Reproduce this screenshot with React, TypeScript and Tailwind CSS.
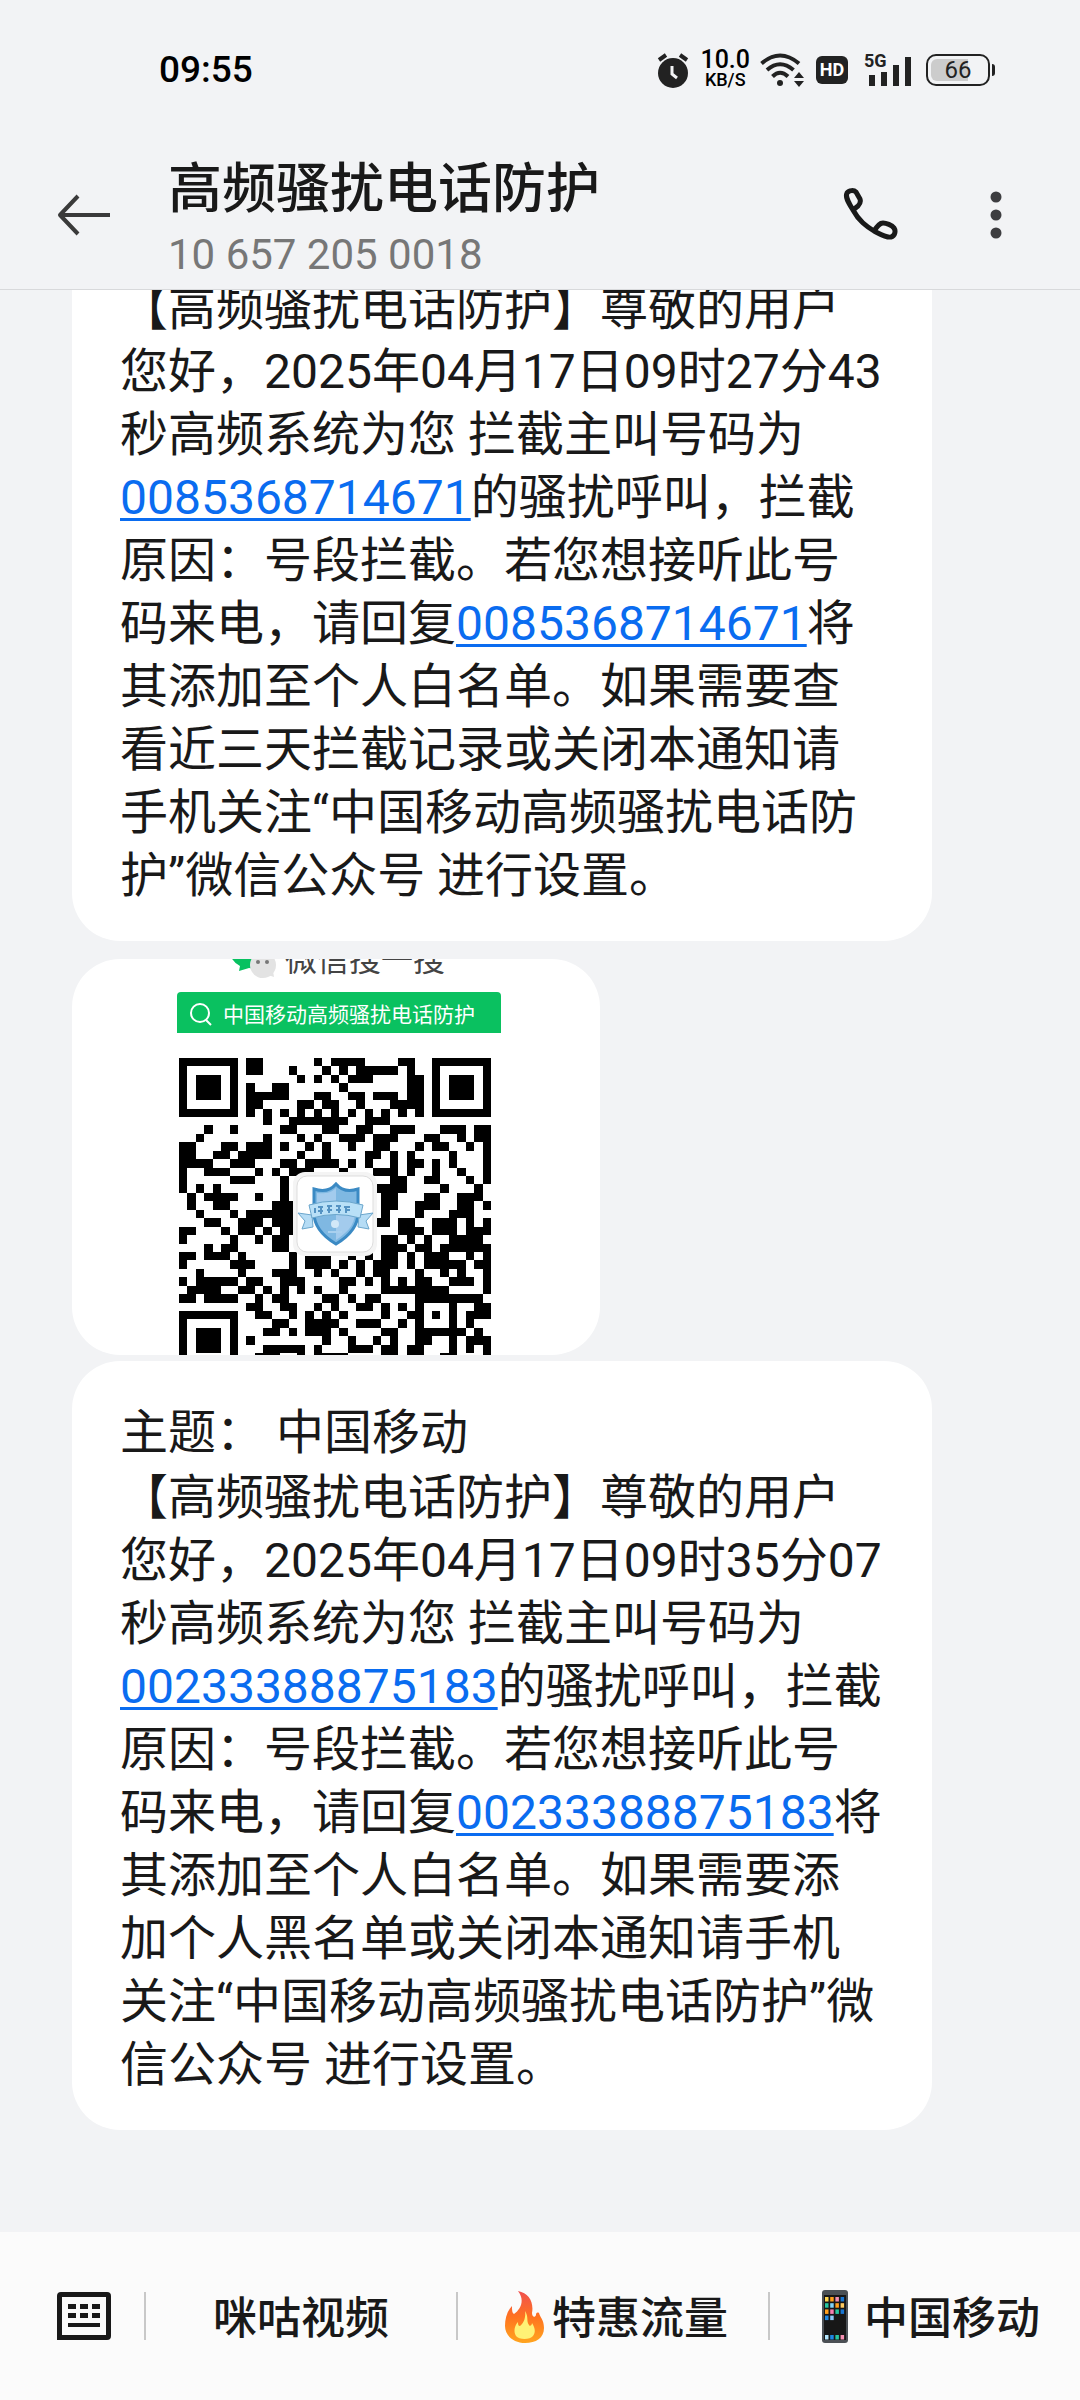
import React from 'react';

// black runs per row, [start, end)
const QR_ROWS: number[][][] = [
    [[0, 7], [8, 10], [16, 17], [18, 22], [26, 28], [30, 37]],
    [[0, 1], [6, 7], [8, 10], [13, 14], [17, 18], [19, 20], [21, 26], [27, 28], [30, 31], [36, 37]],
    [[0, 1], [2, 5], [6, 7], [14, 15], [16, 17], [18, 19], [20, 23], [27, 29], [30, 31], [32, 35], [36, 37]],
    [[0, 1], [2, 5], [6, 7], [8, 9], [11, 13], [19, 20], [27, 29], [30, 31], [32, 35], [36, 37]],
    [[0, 1], [2, 5], [6, 7], [8, 13], [16, 18], [20, 22], [23, 26], [27, 29], [30, 31], [32, 35], [36, 37]],
    [[0, 1], [6, 7], [8, 10], [14, 16], [17, 19], [21, 22], [25, 29], [30, 31], [36, 37]],
    [[0, 7], [8, 9], [10, 11], [12, 13], [14, 15], [16, 17], [18, 19], [20, 21], [22, 23], [24, 25], [26, 27], [28, 29], [30, 37]],
    [[10, 11], [13, 20], [22, 25]],
    [[3, 4], [6, 7], [12, 14], [17, 19], [21, 23], [25, 28], [31, 34], [35, 37]],
    [[2, 3], [10, 11], [14, 15], [16, 17], [19, 22], [23, 26], [29, 31], [33, 34], [35, 37]],
    [[0, 2], [5, 7], [8, 11], [12, 13], [15, 16], [17, 18], [20, 21], [23, 25], [28, 29], [30, 32], [34, 35], [36, 37]],
    [[0, 2], [4, 6], [7, 11], [14, 15], [17, 18], [22, 24], [25, 26], [27, 28], [32, 33], [36, 37]],
    [[0, 4], [6, 9], [12, 14], [15, 19], [20, 21], [22, 23], [25, 26], [27, 29], [30, 31], [32, 33], [36, 37]],
    [[0, 1], [3, 6], [9, 10], [11, 12], [13, 16], [19, 20], [23, 26], [27, 28], [30, 31], [33, 34], [36, 37]],
    [[0, 1], [6, 9], [12, 13], [25, 27], [29, 31], [34, 35], [36, 37]],
    [[0, 1], [2, 3], [4, 5], [12, 13], [23, 27], [31, 32], [35, 36]],
    [[1, 2], [3, 7], [9, 10], [12, 13], [24, 26], [29, 31], [33, 36]],
    [[1, 2], [4, 6], [11, 14], [24, 26], [28, 31], [33, 35], [36, 37]],
    [[2, 3], [6, 7], [8, 14], [24, 25], [28, 29], [32, 35]],
    [[3, 5], [7, 10], [11, 14], [23, 25], [26, 28], [30, 33], [34, 35], [36, 37]],
    [[0, 2], [5, 6], [7, 9], [10, 11], [12, 14], [26, 29], [30, 33], [34, 37]],
    [[0, 1], [6, 7], [9, 10], [11, 13], [24, 26], [27, 28], [29, 30], [32, 36]],
    [[3, 4], [5, 7], [11, 13], [24, 27], [28, 30], [31, 37]],
    [[0, 2], [3, 6], [7, 8], [13, 14], [15, 18], [20, 21], [22, 23], [24, 26], [27, 28], [29, 32], [34, 35], [36, 37]],
    [[0, 1], [6, 9], [13, 14], [15, 18], [19, 20], [21, 22], [23, 26], [27, 28], [29, 34], [35, 37]],
    [[2, 3], [7, 8], [11, 14], [16, 17], [18, 19], [21, 22], [23, 25], [28, 29], [31, 32], [33, 34], [36, 37]],
    [[0, 1], [2, 7], [8, 10], [12, 15], [19, 21], [22, 23], [24, 25], [26, 27], [28, 30], [32, 35], [36, 37]],
    [[1, 5], [7, 9], [10, 11], [12, 13], [14, 15], [16, 17], [19, 20], [24, 32], [36, 37]],
    [[0, 2], [3, 7], [9, 10], [11, 13], [17, 19], [20, 21], [22, 24], [28, 36]],
    [[8, 10], [12, 14], [16, 17], [18, 19], [21, 23], [24, 25], [26, 27], [28, 29], [32, 33], [35, 37]],
    [[0, 7], [9, 11], [13, 14], [15, 16], [17, 18], [19, 20], [24, 25], [27, 29], [30, 31], [32, 33], [34, 37]],
    [[0, 1], [6, 7], [11, 13], [15, 19], [21, 24], [26, 27], [28, 29], [32, 33], [34, 35]],
    [[0, 1], [2, 5], [6, 7], [10, 12], [13, 14], [15, 18], [19, 20], [24, 26], [28, 34], [35, 36]],
    [[0, 1], [2, 5], [6, 7], [8, 9], [17, 18], [20, 21], [23, 24], [25, 26], [28, 30], [32, 33], [34, 37]],
    [[0, 1], [2, 5], [6, 7], [10, 15], [16, 17], [20, 23], [24, 26], [27, 29], [32, 33], [34, 35], [36, 37]],
    [[0, 1], [6, 7], [9, 12], [14, 15], [16, 20], [24, 26], [27, 29], [31, 33], [36, 37]],
];

const QR_PATH = QR_ROWS.map((runs, y) => runs.map(([a, b]) => `M${a} ${y}H${b}V${y + 1}H${a}Z`).join('')).join('');

function StatusBar() {
    return (
        <div className="flex h-35 items-center justify-between pr-[85px] pl-[159px]">
            <span className="text-[37px] leading-10 font-medium text-black">09:55</span>
            <div className="flex items-center">
                <svg width="34" height="36" viewBox="0 0 34 36" aria-hidden="true">
                    <circle cx="17" cy="21" r="15" fill="#222" />
                    <path d="M3 8 10 3M24 3l7 5" stroke="#222" strokeWidth="4" />
                    <path d="M16 14v8l5 4" stroke="#f2f3f5" strokeWidth="3" fill="none" />
                </svg>
                <div className="ml-[10px] flex flex-col items-center font-medium text-black">
                    <span className="text-[25px] leading-5">10.0</span>
                    <span className="text-lg leading-5">KB/S</span>
                </div>
                <svg className="ml-[10px]" width="44" height="34" viewBox="0 0 44 34" aria-hidden="true">
                    <g fill="none" stroke="#222" strokeWidth="4">
                        <path d="M1.5 10.5Q20 -5.500 39 10.500" />
                        <path d="M7 17Q20 5.500 33.500 17" />
                        <path d="M12.500 23.500Q20 16 28 23.500" />
                    </g>
                    <circle cx="20" cy="30" r="3" fill="#222" />
                    <path d="m39 19 5 6H34zM39 34l5-6H34z" fill="#222" />
                </svg>
                <span className="ml-3 flex h-7 w-8 items-center justify-center rounded-md bg-[#222] text-lg leading-5 font-bold text-white">
                    HD
                </span>
                <div className="relative ml-4 h-9 w-12">
                    <svg width="48" height="36" viewBox="0 0 48 36" aria-hidden="true">
                        <path d="M5 23h6v11H5zM17 20h6v14h-6zM29 13h6v21h-6zM41 5h6v29h-6z" fill="#222" />
                    </svg>
                    <span className="absolute top-0 left-0 bg-[#f2f3f5] text-lg leading-[18px] font-bold text-[#222]">
                        5G
                    </span>
                </div>
                <div className="ml-[14px] flex items-center gap-[2px]">
                    <div className="flex h-8 w-[64px] items-center rounded-[10px] border-2 border-[#222] p-[3px]">
                        <div className="flex h-full w-[68%] rounded-l-md bg-[#ccc]">
                            <span className="w-[54px] shrink-0 text-center text-[24px] leading-[22px] text-[#222]">66</span>
                        </div>
                    </div>
                    <span className="h-3 w-[3px] rounded-r bg-[#222]" />
                </div>
            </div>
        </div>
    );
}

function Header() {
    return (
        <div className="flex h-[149px] items-center pr-[62px] pl-[56px]">
            <button type="button" aria-label="返回">
                <svg width="56" height="44" viewBox="0 0 56 44" fill="none" stroke="#3a3a3a" strokeWidth="4">
                    <path d="M54 22H5M22 3 4 22l18 19" strokeLinejoin="round" />
                </svg>
            </button>
            <div className="ml-14 flex-1 pt-2">
                <h1 className="text-[54px] leading-[72px] font-medium text-[#191919]">高频骚扰电话防护</h1>
                <p className="text-[42px] leading-[58px] text-[#777]">10 657 205 0018</p>
            </div>
            <button type="button" aria-label="拨打电话" className="pt-[2px]">
                <svg width="56" height="56" viewBox="0 0 56 56" fill="none" stroke="#191919" strokeWidth="5" strokeLinejoin="round">
                    <path d="M11 22C6 14 3 9 5 5c2-3 7-3 9-1l4 7c1 3 0 5-2 7l-5 4C17 33 24 38 32 43c6 3 12 7 17 6 4-1 5-6 3-9-2-3-8-5-11-5s-5 2-9 8" />
                </svg>
            </button>
            <button type="button" aria-label="更多" className="ml-[76px]">
                <svg width="44" height="56" viewBox="0 0 44 56" fill="#3d3d40">
                    <circle cx="22" cy="10" r="5.500" />
                    <circle cx="22" cy="28" r="5.500" />
                    <circle cx="22" cy="46" r="5.500" />
                </svg>
            </button>
        </div>
    );
}

function Num({ value }: { value: string }) {
    return (
        <a href={`tel:${value}`} className="text-[#0a6cf0] underline decoration-3 underline-offset-4">
            {value}
        </a>
    );
}

function Shield() {
    return (
        <g>
            <rect x="114" y="114" width="84" height="84" rx="12" fill="#f4f4f4" />
            <rect x="118" y="118" width="76" height="76" rx="10" fill="#fff" stroke="#ddd" />
            <path
                d="M157 126c-5 6-13 8-22 5v24c0 15 12 25 22 31 10-6 22-16 22-31v-24c-9 3-17 1-22-5z"
                fill="#7fb8e2"
                stroke="#3b8ac4"
                strokeWidth="3"
            />
            <path d="M157 130c-5 5-12 6-19 5v20h19zM157 155h19c0 13-10 21-19 27z" fill="#a3cbed" />
            <path d="M119 155l14 2 1 12-11 2 3-8zM194 155l-14 2-1 12 11 2-3-8z" fill="#b5dcf5" stroke="#6ba6cc" />
            <path d="M130 147q27-8 54 0l-3 13q-24-7-48 0z" fill="#b9e0f7" stroke="#6ba6cc" />
            <path
                d="M136 150v5m3-6h5m-5 4h5m-2-4v7m6-8h5m-5 4h5m-3-4v7m7-7h5m-5 4h5m-2-4v7m5-6h6m-4 0v6m4-3h-4"
                fill="none"
                stroke="#5593c3"
                strokeWidth="2"
            />
            <circle cx="156" cy="166" r="4" fill="#d2e8f8" />
            <path d="M149 174h14" stroke="#a9d0ee" strokeWidth="2" />
        </g>
    );
}

function QrCard() {
    return (
        <div className="h-[396px] w-[528px] overflow-hidden rounded-[48px] bg-white pl-[105px]">
            <div className="-mt-5 flex h-[53px] items-start pl-[54px]">
                <svg width="48" height="40" viewBox="0 0 48 40" aria-hidden="true">
                    <path d="M0 10h26v20l-8-1-10 3 1-5q-6-3-9-9z" fill="#07c160" />
                    <circle cx="32" cy="26" r="13" fill="#e3e3e3" />
                    <path d="M37 36l6 2-1-6z" fill="#e3e3e3" />
                    <circle cx="27" cy="23" r="2" fill="#777" />
                    <circle cx="36" cy="23" r="2" fill="#777" />
                </svg>
                <span className="ml-[6px] pt-[3px] text-[32px] leading-9 text-[#444]">微信搜一搜</span>
            </div>
            <div className="flex h-[41px] w-[324px] items-center rounded-t-sm bg-[#0ac160] pt-[2px] pl-3 text-white">
                <svg width="24" height="24" viewBox="0 0 24 24" fill="none" stroke="#fff" strokeWidth="2" aria-hidden="true">
                    <circle cx="11" cy="11" r="9" />
                    <path d="m17 18 5 5" />
                </svg>
                <span className="ml-[10px] pt-[2px] text-[21px] leading-6 whitespace-nowrap">中国移动高频骚扰电话防护</span>
            </div>
            <svg className="mt-[25px] ml-[2px]" width="312" height="312" viewBox="0 0 312 312" role="img" aria-label="二维码">
                <path d={QR_PATH} transform="scale(8.432)" shapeRendering="crispEdges" />
                <Shield />
            </svg>
        </div>
    );
}

function Fire() {
    return (
        <svg width="54" height="54" viewBox="0 0 54 54" aria-hidden="true">
            <defs>
                <linearGradient id="flame" x1="0" y1="0" x2="0" y2="1">
                    <stop offset="0" stopColor="#f0504f" />
                    <stop offset=".5" stopColor="#ff7320" />
                    <stop offset="1" stopColor="#ffa51f" />
                </linearGradient>
            </defs>
            <path
                d="M20 1c11 2 16 11 14 22 0 4 3 5 4 2 0-2 1-3 3-2 1 4 5 7 5 15 0 10-8 15-19 15S7 46 7 36c0-7 2-15 7-20 0 4 0 7 2 8 7-5 11-14 4-23z"
                fill="url(#flame)"
            />
            <path
                d="M27 21c4 6 1 10 4 14 1 2 3 0 3-2 3 5 4 9 1 13-3 4-14 4-17 0-3-5-1-11 2-14 0 2 0 4 2 4 4-3 6-9 5-15z"
                fill="#fff176"
            />
        </svg>
    );
}

function Mobile() {
    const colors = ['#ffd54f', '#ff9f1c', '#f48fb1', '#1976d2', '#26c6a0', '#81d4fa', '#ff9f1c', '#ffca60', '#ff9f1c', '#f77fb0', '#26c6a0', '#1976d2', '#1e88e5', '#90caf9'];
    const dock = ['#b3e5fc', '#1e88e5', '#26c6a0', '#f48fb1'];
    return (
        <svg width="54" height="54" viewBox="0 0 54 54" aria-hidden="true">
            <rect x="12" y="0" width="26" height="53" rx="3" fill="#4b5055" />
            <rect x="14" y="5" width="22" height="45" fill="#171717" />
            {colors.map((c, i) => (
                <rect key={i} x={15 + (i % 4) * 5.2} y={7 + Math.floor(i / 4) * 6.2} width="3.500" height="4.500" fill={c} />
            ))}
            {dock.map((c, i) => (
                <rect key={c} x={15 + i * 5.2} y="45" width="3.500" height="4.500" fill={c} />
            ))}
        </svg>
    );
}

function BottomMenu() {
    const items = [
        { label: '咪咕视频', icon: null },
        { label: '特惠流量', icon: <Fire /> },
        { label: '中国移动', icon: <Mobile /> },
    ];
    return (
        <nav className="flex h-[168px] shrink-0 items-center bg-[#fbfbfb]">
            <button type="button" aria-label="键盘" className="pr-8 pl-[56px]">
                <svg width="56" height="50" viewBox="0 0 56 50" fill="#191919">
                    <path d="M5 1h46q4 0 4 4v40q0 4-4 4H1V5q0-4 4-4zm1 5v38h44V6z" fillRule="evenodd" />
                    <path d="M12 13h8v5h-8zM24 13h8v5h-8zM36 13h8v5h-8zM12 22h8v5h-8zM24 22h8v5h-8zM36 22h8v5h-8zM12 32h32v4H12z" />
                </svg>
            </button>
            {items.map((item) => (
                <button
                    key={item.label}
                    type="button"
                    className="flex h-12 flex-1 items-center justify-center border-l-2 border-[#c8c8c8] pt-[2px] text-[44px] leading-[60px] font-medium whitespace-nowrap text-[#191919]"
                >
                    {item.icon}
                    <span className="pt-1">{item.label}</span>
                </button>
            ))}
        </nav>
    );
}

function App() {
    return (
        <div
            lang="zh-CN"
            className="flex h-screen flex-col bg-[#f2f3f5] font-[Roboto,'Noto_Sans_CJK_SC',sans-serif] text-[#191919]"
        >
            <header className="shrink-0 border-b border-[#d8d9db]">
                <StatusBar />
                <Header />
            </header>
            <main className="flex min-h-0 flex-1 flex-col items-start justify-end overflow-hidden pr-[148px] pb-[102px] pl-[72px] text-[48px] leading-[63px]">
                <div className="w-full shrink-0 rounded-b-[48px] bg-white px-12 pb-[34px]">
                    <p>
                        【高频骚扰电话防护】尊敬的用户您好，2025年04月17日09时27分43秒高频系统为您 拦截主叫号码为
                        <Num value="0085368714671" />
                        的骚扰呼叫，拦截原因：号段拦截。若您想接听此号码来电，请回复
                        <Num value="0085368714671" />
                        将其添加至个人白名单。如果需要查看近三天拦截记录或关闭本通知请手机关注“中国移动高频骚扰电话防护”微信公众号 进行设置。
                    </p>
                </div>
                <div className="mt-[18px] mb-[6px] shrink-0">
                    <QrCard />
                </div>
                <div className="w-full shrink-0 rounded-[48px] bg-white px-12 pt-10 pb-[34px]">
                    <p className="mb-[2px]">主题： 中国移动</p>
                    <p>
                        【高频骚扰电话防护】尊敬的用户您好，2025年04月17日09时35分07秒高频系统为您 拦截主叫号码为
                        <Num value="00233388875183" />
                        的骚扰呼叫，拦截原因：号段拦截。若您想接听此号码来电，请回复
                        <Num value="00233388875183" />
                        将其添加至个人白名单。如果需要添加个人黑名单或关闭本通知请手机关注“中国移动高频骚扰电话防护”微信公众号 进行设置。
                    </p>
                </div>
            </main>
            <BottomMenu />
        </div>
    );
}

export default App;
